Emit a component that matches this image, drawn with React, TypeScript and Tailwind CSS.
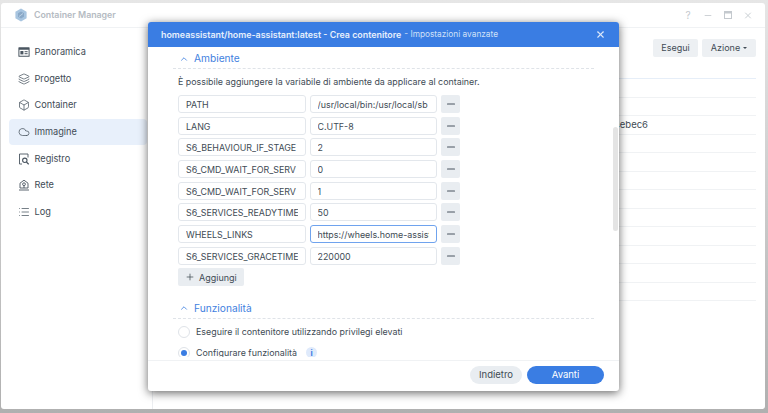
import { Box, Cloud, Layers, List, Minus, Plus, X, ChevronUp } from "lucide-react";

const envRows = [
  { name: "PATH", value: "/usr/local/bin:/usr/local/sb" },
  { name: "LANG", value: "C.UTF-8" },
  { name: "S6_BEHAVIOUR_IF_STAGE", value: "2" },
  { name: "S6_CMD_WAIT_FOR_SERV", value: "0" },
  { name: "S6_CMD_WAIT_FOR_SERV", value: "1" },
  { name: "S6_SERVICES_READYTIME", value: "50" },
  { name: "WHEELS_LINKS", value: "https://wheels.home-assistant.io", focus: true },
  { name: "S6_SERVICES_GRACETIME", value: "220000" },
];

function PanelIcon() {
  return (
    <svg width="12" height="12" viewBox="0 0 12 12" fill="#4a5560">
      <path fillRule="evenodd" d="M1 1.2h10a.6.6 0 0 1 .6.6v8.4a.6.6 0 0 1-.6.6H1a.6.6 0 0 1-.6-.6V1.800a.6.6 0 0 1 .6-.6ZM1.400 3.800v6h9.200v-6H1.400Z" />
      <rect x="2.400" y="5" width="3" height="3.400" />
      <rect x="6.600" y="5.200" width="3" height="1" />
      <rect x="6.600" y="7.200" width="3" height="1" />
    </svg>
  );
}

function RegistryIcon() {
  return (
    <svg width="12" height="12" viewBox="0 0 12 12" fill="none" stroke="#4a5560" strokeWidth="0.9">
      <path d="M4 11H1.500V1h8.500v3.500" />
      <circle cx="6.800" cy="7.300" r="2.200" strokeWidth="1.100" />
      <path d="m8.400 9 2.300 2.200" strokeWidth="1.200" />
    </svg>
  );
}

function NetworkIcon() {
  return (
    <svg width="12" height="12" viewBox="0 0 12 12" fill="none" stroke="#4a5560" strokeWidth="0.9">
      <path d="M2 9V4.200L6 1.200l4 3V9Z" />
      <circle cx="6" cy="5.200" r="1.400" />
      <path d="M6 6.800V9M1 11h10" />
    </svg>
  );
}

const navItems = [
  { label: "Panoramica", icon: <PanelIcon /> },
  { label: "Progetto", icon: <Layers size={12} strokeWidth={1.5} /> },
  { label: "Container", icon: <Box size={12} strokeWidth={1.5} /> },
  { label: "Immagine", icon: <Cloud size={12} strokeWidth={1.5} />, active: true },
  { label: "Registro", icon: <RegistryIcon /> },
  { label: "Rete", icon: <NetworkIcon /> },
  { label: "Log", icon: <List size={12} strokeWidth={1.5} /> },
];

function SectionHeader({ title }: { title: string }) {
  return (
    <div className="flex h-[22px] items-center gap-[5px] border-b border-dashed border-[#dfe3e8] pl-[6px] pt-[2px] text-[#3f7fe0]">
      <ChevronUp size={10} strokeWidth={2} />
      <span className="text-[10.2px]">{title}</span>
    </div>
  );
}

function TextBox({ text, focus }: { text: string; focus?: boolean }) {
  return (
    <div className={`h-[18px] w-[127.5px] rounded-[3px] border bg-white px-[7px] text-[8.9px] leading-[17px] text-[#414b55] ${focus ? "border-[#6fa3ee]" : "border-[#e3e7ec]"}`}>
      <div className="h-[16px] overflow-hidden whitespace-nowrap">{text}</div>
    </div>
  );
}

export default function App() {
  return (
    <div className="relative h-[413px] w-[768px] overflow-hidden bg-gradient-to-b from-[#e6e6e6] to-[#b0b0b0] font-['Inter',sans-serif]">
      {/* app window */}
      <div className="absolute left-[1px] top-[3px] flex h-[406px] w-[764px] flex-col rounded-[3px] bg-white">
        <div className="flex h-[25px] shrink-0 items-center border-b border-[#f0f2f4] pl-[13px] pr-[12px]">
          <svg width="14" height="14" viewBox="0 0 14 14">
            <path d="M7 .5 12.600 3.700v6.600L7 13.500 1.400 10.300V3.700Z" fill="#a8c5e0" />
            <path d="M7 3.500 10 5.200v3.600L7 10.500 4 8.800V5.200Z" fill="#8aa9c8" />
            <path d="m5 8.500 4-3" stroke="#c9dcec" strokeWidth="0.8" />
          </svg>
          <span className="ml-[6px] text-[8.8px] font-semibold text-[#b5bbc2]">Container Manager</span>
          <div className="ml-auto flex items-center gap-[10px] text-[#c4c9ce]">
            <span className="flex w-[10px] justify-center text-[10px]">?</span>
            <span className="flex w-[10px] justify-center"><Minus size={11} /></span>
            <span className="flex w-[10px] justify-center">
              <svg width="8" height="8" viewBox="0 0 8 8"><rect x=".5" y=".5" width="7" height="7" fill="none" stroke="currentColor" /><rect x=".5" y=".5" width="7" height="2" fill="currentColor" /></svg>
            </span>
            <span className="flex w-[10px] justify-center"><X size={11} strokeWidth={2.2} /></span>
          </div>
        </div>

        <div className="flex min-h-0 flex-1">
          <div className="flex w-[152px] shrink-0 flex-col border-r border-[#eceef1] pl-[8px] pr-[5px] pt-[10.5px]">
            {navItems.map((item) => (
              <div
                key={item.label}
                className={`flex h-[26.7px] shrink-0 items-center gap-[4.5px] rounded-[4px] pl-[9px] text-[9.2px] text-[#414b55] ${item.active ? "bg-[#e8f0fb]" : ""}`}
              >
                <span className="flex w-[12px] justify-center text-[#4a5560]">{item.icon}</span>
                {item.label}
              </div>
            ))}
          </div>

          <div className="flex-1 px-[9px] pt-[11px]">
            <div className="flex justify-end gap-[4px]">
              <div className="flex h-[18px] w-[45px] items-center justify-center rounded-[2px] bg-[#edf0f3] text-[9px] text-[#414b55]">Esegui</div>
              <div className="flex h-[18px] w-[54px] items-center justify-center gap-[3px] rounded-[2px] bg-[#edf0f3] text-[9px] text-[#414b55]">
                Azione
                <span className="h-0 w-0 border-x-[2px] border-t-[2px] border-x-transparent border-t-[#414b55]" />
              </div>
            </div>
            <div className="mt-[21px] border-t border-[#e6eef8]">
              {Array.from({ length: 12 }).map((_, i) => (
                <div key={i} className="flex h-[18.5px] items-center justify-end border-b border-[#f0f2f4] pr-[108px] text-[9.5px] text-[#414b55]">
                  {i === 2 ? "4ebec6" : ""}
                </div>
              ))}
            </div>
          </div>
        </div>
      </div>

      {/* modal */}
      <div className="absolute left-[148px] top-[22px] flex h-[369px] w-[471px] flex-col overflow-hidden rounded-[3px] bg-white shadow-[0_2px_10px_rgba(0,0,0,0.6)]">
        <div className="flex h-[25px] shrink-0 items-center bg-[#3a7de3] px-[13px] text-white">
          <span className="text-[8.9px] font-semibold text-[#e6effc]">homeassistant/home-assistant:latest - Crea contenitore</span>
          <span className="ml-[3px] text-[8.3px] text-[#cfe0f8]">- Impostazioni avanzate</span>
          <X size={11} strokeWidth={2.4} className="ml-auto text-[#dbe7fa]" />
        </div>

        <div className="relative mb-[3px] min-h-0 flex-1 overflow-hidden px-[25px]">
          <SectionHeader title="Ambiente" />
          <p className="mt-[7px] h-[12px] pl-[5px] text-[8.9px] leading-[12px] text-[#414b55]">
            È possibile aggiungere la variabile di ambiente da applicare al container.
          </p>
          <div className="mt-[7px] flex flex-col gap-[3.7px] pl-[5px]">
            {envRows.map((row, i) => (
              <div key={i} className="flex h-[18px] items-center gap-[4px]">
                <TextBox text={row.name} />
                <TextBox text={row.value} focus={row.focus} />
                <div className="flex h-[18px] w-[19px] items-center justify-center rounded-[2px] bg-[#e9edf1] text-[#4a5560]">
                  <Minus size={12} strokeWidth={2.2} />
                </div>
              </div>
            ))}
          </div>
          <div className="ml-[5px] mt-[3.5px] flex h-[18px] w-[66px] items-center gap-[4px] rounded-[2px] bg-[#e9edf1] pl-[7px] text-[9px] text-[#414b55]">
            <Plus size={10} strokeWidth={1.8} />
            Aggiungi
          </div>
          <div className="mt-[10.5px]">
            <SectionHeader title="Funzionalità" />
          </div>
          <div className="mt-[7px] flex h-[12px] items-center gap-[6px] pl-[5px] text-[8.9px] text-[#414b55]">
            <span className="h-[12px] w-[12px] rounded-full border border-[#dfe3e8]" />
            Eseguire il contenitore utilizzando privilegi elevati
          </div>
          <div className="mt-[9px] flex h-[12px] items-center gap-[6px] pl-[5px] text-[8.9px] text-[#414b55]">
            <span className="flex h-[12px] w-[12px] items-center justify-center rounded-full border border-[#dfe3e8]">
              <span className="h-[6px] w-[6px] rounded-full bg-[#3a7de3]" />
            </span>
            Configurare funzionalità
            <span className="ml-[3px] flex h-[11px] w-[11px] items-center justify-center rounded-full bg-[#dfeafb] text-[8px] font-bold text-[#3a7de3]">
              i
            </span>
          </div>
          {/* scrollbar */}
          <div className="absolute right-[1px] top-[80px] h-[104px] w-[5px] rounded-full bg-[#e4e4e4]" />
        </div>

        <div className="flex h-[31px] shrink-0 items-start justify-end gap-[5px] border-t border-[#f0f2f4] pr-[15px] pt-[5px]">
          <div className="flex h-[18px] w-[52px] items-center justify-center rounded-full bg-[#e9edf1] text-[9.5px] text-[#414b55]">Indietro</div>
          <div className="flex h-[18px] w-[77px] items-center justify-center rounded-full bg-[#3a7de3] text-[9.5px] text-white">Avanti</div>
        </div>
      </div>
    </div>
  );
}
